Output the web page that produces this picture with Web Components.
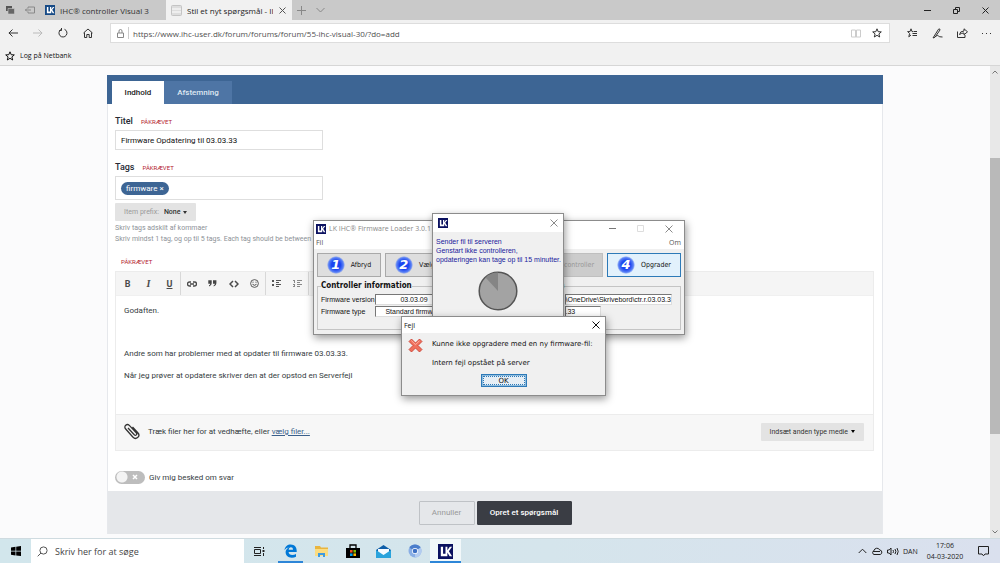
<!DOCTYPE html>
<html lang="da">
<head>
<meta charset="utf-8">
<title>Stil et nyt spørgsmål - IHC</title>
<style>
  html, body { margin: 0; }
  body { font-family: "Open Sans", "Noto Sans", sans-serif; font-size: 8px; color: #222; background: #fbfbfc; }
</style>
</head>
<body>
<desk-top></desk-top>

<script>
const BASE = `*{box-sizing:border-box}button,input,select{font:inherit;color:inherit;margin:0;padding:0;border:0;background:none;border-radius:0}
svg{display:block;flex:none}svg.l{fill:none;stroke:currentColor;stroke-width:1}p,h2{margin:0}`;

function element(name, css, html) {
  customElements.define(name, class extends HTMLElement {
    constructor() {
      super();
      this.attachShadow({ mode: "open" }).innerHTML = `<style>${BASE}${css}</style>${html}`;
    }
  });
}

/* LK logo tile */
element("lk-logo", `:host{display:block;width:10px;height:10px;flex:none}svg{width:100%;height:100%}`,
`<svg viewBox="0 0 16 16"><rect width="16" height="16" fill="var(--tile,#0b1160)"/><path d="M3 3h2.400v7.400H8V13H3zM8 3h2v3.600L12.600 3H15l-3.400 4.600L15 13h-2.600L10 9v4H8z" fill="#fff"/></svg>`);

/* Browser: tabs, address row, favourites */
element("browser-tabs", `
:host{display:flex;height:20px;background:#c9c9c9;align-items:stretch;color:#333}
.sys{display:flex;align-items:center;gap:10px;width:45px;padding-left:5px;color:#555}
.tab{display:flex;align-items:center;gap:5px;width:121px}
.tab.on{width:126px;background:#f1f1f1;padding:0 5px;color:#222}
.tab button:last-child{width:9px}
.tab .t{flex:1;justify-content:flex-start;white-space:nowrap;overflow:hidden;text-align:left}
button{display:flex;align-items:center;justify-content:center}
.more{display:flex;gap:10px;align-items:center;padding-left:5px;color:#888;flex:1}
.win{display:flex;align-items:center;color:#222}
.win button{width:29px}
`, `<div class="sys"><svg width="10" height="10" viewBox="0 0 10 10"><path d="M1 1h6v5H1z" fill="#555"/><path d="M3 3.500h6.500v5.500H3z" fill="#666" stroke="#c9c9c9" stroke-width=".6"/></svg>
<svg class="l" width="10" height="8" viewBox="0 0 10 8"><path d="M3 2.500V1h6.500v6H3V5.500M0 4h6M2 2.500L.5 4 2 5.500" stroke="#888"/></svg></div>
<div class="tab" role="tab"><lk-logo style="--tile:#164a86"></lk-logo><button class="t">IHC® controller Visual 3</button></div>
<div class="tab on" role="tab"><svg width="11" height="11" viewBox="0 0 11 11"><rect x=".5" y=".5" width="10" height="10" rx="1" fill="#ddd" stroke="#c4c4c4"/><path d="M1 4h9M1 7h9" stroke="#fff"/></svg><button class="t">Stil et nyt spørgsmål - II</button><button aria-label="Luk fane"><svg class="l" width="7" height="7" viewBox="0 0 7 7"><path d="M.5.5l6 6M6.500.5l-6 6" stroke="#555"/></svg></button></div>
<div class="more"><button aria-label="Ny fane"><svg class="l" width="9" height="9"><path d="M4.500 0v9M0 4.500h9"/></svg></button><button aria-label="Faner"><svg class="l" width="9" height="6"><path d="M.5 1l4 4 4-4"/></svg></button></div>
<div class="win"><button aria-label="Minimer"><svg class="l" width="7" height="3"><path d="M0 1.500h7"/></svg></button><button aria-label="Gendan"><svg class="l" width="7" height="7"><path d="M.5 2.500h4v4h-4zM2.500 2V.5h4v4H5"/></svg></button><button aria-label="Luk"><svg class="l" width="7" height="7"><path d="M.5.5l6 6M6.500.5l-6 6"/></svg></button></div>`);

element("address-row", `
:host{display:flex;height:26px;background:#f1f1f1;align-items:center;padding:0 5px 0 7px;color:#333}
button{display:flex;align-items:center;justify-content:center;height:20px;flex:none}
nav{display:flex;width:103px;gap:13px;flex:none}nav button{width:12px}
.bar{flex:1;display:flex;align-items:center;height:20px;background:#fff;border:1px solid #ddd;padding:0 4px 0 6px;gap:4px}
.bar input{flex:1;min-width:0;border-left:1px solid #ccc;padding-left:4px;height:12px;color:#505050;outline:0}
.bar button{width:17px}
.acts{display:flex;gap:9px;padding-left:14px}.acts button{width:16px}
`, `<nav><button aria-label="Tilbage"><svg class="l" width="10" height="8"><path d="M10 4H.8M4.500.5L1 4l3.500 3.500"/></svg></button>
<button aria-label="Frem" style="color:#bbb"><svg class="l" width="10" height="8"><path d="M0 4h9.200M5.500.5L9 4 5.500 7.500"/></svg></button>
<button aria-label="Opdater"><svg class="l" width="10" height="10"><path d="M6.500 1.300A4 4 0 1 1 3 1.500M3.500 0v2.500H1.200"/></svg></button>
<button aria-label="Hjem"><svg class="l" width="10" height="10"><path d="M.5 5L5 1l4.500 4M1.500 4.500v5h2.300V6.500h2.400v3h2.300v-5"/></svg></button></nav>
<div class="bar"><svg class="l" width="7" height="9"><path d="M.5 4h6v4.500h-6zM2 4V2a1.500 1.500 0 0 1 3 0v2" stroke="#888"/></svg>
<input aria-label="Adresse" value="https://www.ihc-user.dk/forum/forums/forum/55-ihc-visual-30/?do=add">
<button aria-label="Læsevisning" style="color:#ccc"><svg class="l" width="10" height="9"><path d="M.5 1h4v7h-4zM5.500 1h4v7h-4zM4.500 8h1"/></svg></button>
<button aria-label="Føj til favoritter"><svg class="l" width="10" height="10" viewBox="0 0 10 10"><path d="M5 .8l1.200 2.900 3.100.2-2.400 2 .8 3.100L5 7.300 2.300 9l.8-3.100-2.400-2 3.100-.2z"/></svg></button></div>
<div class="acts"><button aria-label="Hub"><svg class="l" width="11" height="10" viewBox="0 0 11 10"><path d="M6 3.600H5L4 .8 3 3.600H.6l2 1.900-.8 3.300L4 7M5.500 5.500H10M5.500 7.500H10M6.500 3.500H10"/></svg></button>
<button aria-label="Noter"><svg class="l" width="11" height="11" viewBox="0 0 11 11"><path d="M1 10L6.500 1.200Q8 .2 8 2L3 9.200 1 10M4 8q2-1 2.500 0T10.500 9"/></svg></button>
<button aria-label="Del"><svg class="l" width="11" height="10" viewBox="0 0 11 10"><path d="M.5 3.500v6H8V7M2.500 6.500Q3 3 7 3V.8l3.500 3L7 6.800V5Q4.500 5 2.500 6.500z"/></svg></button>
<button aria-label="Flere"><svg width="10" height="3"><path d="M0 1h1v1H0zM4 1h1v1H4zM8 1h1v1H8z" fill="#333"/></svg></button></div>`);

element("favourites-row", `
:host{display:flex;height:20px;background:#f1f1f1;border-bottom:1px solid #d6d6d6;align-items:center;padding-left:5px;font-size:7px}
a{display:flex;gap:5px;align-items:center;color:#111;text-decoration:none}
`, `<a href="#"><svg class="l" width="10" height="10" viewBox="0 0 10 10"><path d="M5 .8l1.200 2.900 3.100.2-2.400 2 .8 3.100L5 7.300 2.300 9l.8-3.100-2.400-2 3.100-.2z"/></svg>Log på Netbank</a>`);

element("page-scrollbar", `
:host{display:flex;flex-direction:column;width:10px;background:#e8e8e8;align-items:center;color:#777;padding:4px 0}
.before{flex:84}.thumb{flex:276;width:10px;background:#b9b9b9}.after{flex:96}
`, `<svg class="l" width="6" height="4"><path d="M.5 3.500L3 1l2.500 2.500"/></svg><span class="before"></span><span class="thumb"></span><span class="after"></span><svg class="l" width="6" height="4"><path d="M.5.5L3 3 5.500.5"/></svg>`);

/* Forum form */
element("form-label", `
:host{display:flex;align-items:baseline;gap:8px;height:17px;line-height:16px}
b{font-size:9px;font-weight:500;color:#272a34}
:host([bare]) b{display:none}
span{font-size:6px;color:#b3202c}
`, `<b><slot></slot></b><span>PÅKRÆVET</span>`);

element("editor-toolbar", `
:host{display:flex;height:24px;background:#f5f5f5;border-bottom:1px solid #f0f0f0;color:#4a4a4a;padding-left:1px}
div{display:flex;border-right:1px solid #d8d8d8}
button{width:21px;display:flex;align-items:center;justify-content:center;font-size:9px;font-weight:700}
i{font-family:"Liberation Serif",serif;font-size:10px}
`, `<div><button>B</button><button><i>I</i></button><button><u>U</u></button></div>
<div><button aria-label="Link"><svg class="l" width="10" height="6" viewBox="0 0 10 6"><path d="M4 1H2.500a2 2 0 0 0 0 4H4M6 1h1.500a2 2 0 0 1 0 4H6M3 3h4" stroke-width="1.400"/></svg></button>
<button aria-label="Citat"><svg width="9" height="7" viewBox="0 0 9 7" fill="#444"><path d="M.3.3h3.400v3Q3.700 6 1 6.600V5.200Q2.200 4.900 2.200 3.700H.3zM5 .3h3.400v3Q8.400 6 5.700 6.600V5.200Q6.900 4.900 6.900 3.700H5z"/></svg></button>
<button aria-label="Kode"><svg class="l" width="10" height="8" viewBox="0 0 10 8"><path d="M4 1L1 4l3 3M6 1l3 3-3 3" stroke-width="1.500"/></svg></button>
<button aria-label="Humørikon"><svg class="l" width="9" height="9" viewBox="0 0 9 9"><circle cx="4.500" cy="4.500" r="3.900" stroke-width=".9"/><path d="M2.500 5.300q2 2 4 0M3 2.700v1M6 2.700v1"/></svg></button></div>
<div><button aria-label="Punktliste"><svg width="9" height="7" fill="#555"><path d="M0 0h2v2H0zM0 4h2v2H0zM4 0h5v1H4zM4 2h3v1H4zM4 4h5v1H4zM4 6h3v1H4z"/></svg></button>
<button aria-label="Nummerliste"><svg width="9" height="7" fill="#888"><path d="M0 0h2v3H1V1H0zM0 4h2v3H0V6h1V5H0zM4 0h5v1H4zM4 2h3v1H4zM4 4h5v1H4zM4 6h3v1H4z"/></svg></button></div>`);

element("post-editor", `
:host{display:block;border:1px solid #ececec}
.text{height:118px;padding:8px 8px 0;line-height:14px;color:#353c41;outline:0}
.text p{margin-bottom:8px}.text p.gap{margin-bottom:29px}
footer{display:flex;align-items:center;height:36px;background:#f7f7f7;border-top:1px solid #ececec;padding:0 9px 2px 8px;color:#353c41}
footer span{flex:1;padding-left:8px}
a{color:#3a5f8b}
button{display:flex;gap:3px;align-items:center;height:18px;padding:0 9px;background:#e3e3e3;border-radius:1px;font-size:7px;color:#333}
`, `<editor-toolbar></editor-toolbar>
<div class="text" contenteditable="true" role="textbox" aria-label="Indlæg"><p class="gap">Godaften.</p><p>Andre som har problemer med at opdater til firmware 03.03.33.</p><p>Når jeg prøver at opdatere skriver den at der opstod en Serverfejl</p></div>
<footer><svg class="l" width="16" height="17" viewBox="0 0 16 17"><path d="M4 5l6.500 7a1.400 1.400 0 0 0 2-1.900L5.300 2.400A2.500 2.500 0 0 0 1.500 5.800l7.500 8.400a3.200 3.200 0 0 0 5-4.200L8.500 4" stroke="#333" stroke-width="1.300"/></svg>
<span>Træk filer her for at vedhæfte, eller <a href="#">vælg filer...</a></span>
<button>Indsæt anden type medie<svg width="4" height="3"><path d="M0 0h4L2 3z"/></svg></button></footer>`);

element("forum-form", `
:host{display:block;width:calc(100% - 16px);max-width:776px;margin:0 auto;background:#fff;border:1px solid #e6e8ec;border-width:0 1px;font-family:Roboto,sans-serif;font-size:8px;box-sizing:border-box}
.tabs{display:flex;align-items:flex-end;height:29px;margin:0 -1px;background:#3d6594;padding-left:5px}
.tabs button{height:23px;font-weight:500;color:#dfe8f2;width:68px;background:#4e75a5}
.tabs .on{background:#fff;color:#222;width:52px}
form{display:block}
.body{padding:9px 8px 7px 7px}
.box{display:flex;align-items:center;width:208px;max-width:100%;border:1px solid #dedede;padding:0 5px}
input.box{height:20px;color:#111}
.tags{height:24px}
.tag{display:flex;align-items:center;height:13px;border-radius:7px;background:#3d6594;color:#fff;padding:0 5px}
.prefix{display:flex;align-items:center;justify-content:center;width:81px;height:18px;margin:3px 0 2px;background:#e3e3e3;border-radius:1px;color:#999;font-size:7px;gap:5px}
.prefix select{appearance:none;color:#333;font-weight:500}
.prefix span{display:flex;align-items:center;gap:2px}
.help{font-size:7px;line-height:11px;color:#8d9297;white-space:nowrap}
.notify{display:flex;align-items:center;gap:4px;height:14px;margin:19px 0 0;color:#353c41}
.notify input{appearance:none;width:30px;height:13px;border-radius:7px;background:radial-gradient(circle at 7px 6px,#f4f4f4 5px,transparent 6px),#bdbdbd}
.sw{display:grid;align-items:center}.sw>*{grid-area:1/1}.sw svg{margin-left:17px;pointer-events:none}
.foot{display:flex;justify-content:center;align-items:center;gap:2px;height:43px;background:#e5e7ea}
.foot button{height:24px;border:1px solid #bfc2c6;color:#999;width:56px;border-radius:1px}
.foot .main{background:#3a3d44;color:#fff;border-color:#3a3d44;width:95px;font-weight:500}
`, `<div class="tabs" role="tablist"><button class="on" role="tab">Indhold</button><button role="tab">Afstemning</button></div>
<form><div class="body">
<form-label>Titel</form-label><input class="box" aria-label="Titel" value="Firmware Opdatering til 03.03.33">
<form-label style="margin-top:9px">Tags</form-label>
<div class="box tags"><button type="button" class="tag">firmware ×</button></div>
<label class="prefix">Item prefix:<span><select><option>None</option></select><svg width="4" height="3"><path d="M0 0h4L2 3z" fill="#333"/></svg></span></label>
<p class="help">Skriv tags adskilt af kommaer</p><p class="help">Skriv mindst 1 tag, og op til 5 tags. Each tag should be between</p>
<form-label bare style="margin:9px 0 0 6px"></form-label>
<post-editor></post-editor>
<label class="notify"><span class="sw"><input type="checkbox"><svg width="6" height="6"><path d="M1 1l4 4M5 1L1 5" stroke="#fff" stroke-width="1.500"/></svg></span>Giv mig besked om svar</label>
</div><div class="foot"><button type="button">Annuller</button><button type="button" class="main">Opret et spørgsmål</button></div></form>`);

/* Desktop windows */
element("app-window", `
:host{display:block;position:absolute;box-sizing:border-box;background:#f0f0f0;border:1px solid #8c8c8c;box-shadow:1px 3px 8px rgba(0,0,0,.4);font-size:7px;color:#111}
header{display:flex;align-items:center;gap:3px;height:var(--bar,15px);background:#fff;padding:0 var(--end,5px) 0 2px;color:var(--ink,#8a8a8a)}
slot[name=title]{display:block;flex:1;white-space:nowrap}
.b{display:flex;align-items:center;gap:21px}
`, `<header><slot name="icon"></slot><slot name="title"></slot><div class="b"><slot name="controls"></slot><button aria-label="Luk"><svg class="l" width="8" height="8"><path d="M.5.5l7 7M7.500.5l-7 7"/></svg></button></div></header><slot></slot>`);

element("step-button", `
:host{display:block;font-family:"DejaVu Sans Condensed","DejaVu Sans",sans-serif}
button{width:100%;height:24px;display:flex;align-items:center;justify-content:center;gap:6px;background:#dedede;border:1px solid #a9a9a9;white-space:nowrap}
:host([active]) button{background:#e2f1fc;border-color:#2d7ab8}
:host([off]) button{color:#999;background:#ccc;border-color:#bfbfbf;justify-content:flex-end;padding-right:8px}
:host([off]) .n{display:none}
.n{width:18px;height:18px;border-radius:50%;background:radial-gradient(circle,#1c45f0 35%,#5b82f5 58%,transparent 72%);color:#fff;font:italic 700 13px/18px "DejaVu Sans",sans-serif;text-align:center}
`, `<button><span class="n"><slot name="n"></slot></span><slot></slot></button>`);

element("loader-panel", `
:host{display:block}
.menu{display:flex;justify-content:space-between;height:13px;line-height:13px;background:#fff;padding:0 3px 0 2px;color:#555}
.steps{display:grid;grid-template-columns:64px 60px 1fr 74px;gap:4px;padding:4px 3px}
.groups{display:grid;grid-template-columns:1fr 1fr;gap:3px;padding:0 3px 4px}
fieldset{margin:0;border:1px solid #c4c4c4;padding:2px 3px 0;min-width:0;height:49px}
fieldset+fieldset{padding-right:8px}
legend{font:700 8px/10px "DejaVu Sans Condensed","DejaVu Sans",sans-serif;padding:0;white-space:nowrap}
.row{display:grid;grid-template-columns:54px 1fr;align-items:center;height:12px;white-space:nowrap;font-family:"Liberation Sans",sans-serif}
fieldset+fieldset .row{grid-template-columns:60px 1fr}
input{width:100%;height:11px;background:#fff;border:1px solid #777;border-right-color:#ddd;border-bottom-color:#ddd;min-width:0}
.row .s{width:78px;text-align:center}
.row .v{width:36px}
`, `<div class="menu"><span>Fil</span><span>Om</span></div>
<div class="steps"><step-button><span slot="n">1</span>Afbryd</step-button><step-button><span slot="n">2</span>Vælg</step-button><step-button off>controller</step-button><step-button active><span slot="n">4</span>Opgrader</step-button></div>
<div class="groups"><fieldset><legend>Controller information</legend>
<label class="row">Firmware version<input class="s" value="03.03.09"></label><label class="row">Firmware type<input class="s" value="Standard firmware"></label></fieldset>
<fieldset><legend>Fil information</legend><label class="row"><span></span><input aria-label="Fil" value="\\OneDrive\\Skrivebord\\ctr.r.03.03.33"></label><label class="row"><span></span><input class="v" aria-label="Version" value=".33"></label></fieldset></div>`);

element("progress-panel", `
:host{display:flex;flex-direction:column;align-items:center;padding:5px 3px 0;height:84px;font-family:"Liberation Sans",sans-serif}
p{color:#1a1a9c;line-height:9px;align-self:stretch;white-space:nowrap}
svg{margin-top:7px}
`, `<p>Sender fil til serveren<br>Genstart ikke controlleren,<br>opdateringen kan tage op til 15 minutter.</p>
<svg width="40" height="40" viewBox="0 0 40 40"><circle cx="20" cy="20" r="18.800" fill="#a3a3a3" stroke="#555" stroke-width="1.500"/><path d="M20 20V1.500A18.500 18.500 0 0 0 7.500 6.500z" fill="#858585"/></svg>`);

element("error-panel", `
:host{display:grid;grid-template-columns:15px 1fr;column-gap:9px;padding:5px 6px 8px;font-family:"DejaVu Sans",sans-serif}
p{line-height:10px;padding-top:1px}p+p{margin-top:8px}
.msg{white-space:nowrap}
button{grid-column:1/3;justify-self:center;width:46px;height:13px;margin-top:6px;background:#e6eef5;border:1px solid #2d7ab8;box-shadow:inset 0 0 0 1px #8fbbdc;outline:1px dotted #2d7ab8;outline-offset:-3px}
`, `<svg width="15" height="15" viewBox="0 0 15 15"><path d="M1 3.500L3.500 1l4 4 4-4L14 3.500l-4 4 4 4-2.500 2.500-4-4-4 4L1 11.500l4-4z" fill="#ef6f5c" stroke="#c63a2c" stroke-width=".8"/><path d="M3.300 2.500l4.200 4.200 4-4" fill="none" stroke="#ffb1a0"/></svg>
<div class="msg"><p>Kunne ikke opgradere med en ny firmware-fil:</p><p>Intern fejl opstået på server</p></div><button>OK</button>`);

/* Taskbar */
element("task-bar", `
:host{display:flex;height:25px;box-sizing:border-box;background:linear-gradient(90deg,#d2e6ec,#d5e5ec 55%,#dae0ee);border-top:1px solid #cfdbe0}
button{width:31px;display:flex;align-items:center;justify-content:center;border-bottom:2px solid transparent;border-top:2px solid transparent}
.run{border-bottom-color:#2d86d8;width:25px;margin:0 3px}
.on{background:#f2f8fa;border-bottom-color:#2d86d8}
label{display:flex;align-items:center;gap:7px;width:213px;background:#fff;padding:0 6px;color:#555}
input{flex:1;min-width:0;font-size:9px}input::placeholder{color:#444;opacity:1}
.tray{margin-left:auto;display:flex;align-items:center;gap:4px;color:#222;padding-right:5px}
.tray span{font-size:7px;width:16px}
.clock{width:44px;text-align:center;line-height:11px;font-size:7px}
`, `<button aria-label="Start"><svg width="10" height="10"><path d="M0 1.500l4.500-.7v4H0zM5.200.7L10 0v4.800H5.200zM0 5.500h4.500v4L0 8.800zM5.200 5.500H10V10l-4.800-.6z"/></svg></button>
<label><svg class="l" width="11" height="11"><circle cx="6.500" cy="4.500" r="3.600"/><path d="M4 7L.7 10.300"/></svg><input type="search" placeholder="Skriv her for at søge" aria-label="Søg"></label>
<button aria-label="Opgavevisning"><svg class="l" width="11" height="9" viewBox="0 0 11 9"><path d="M.5 2.500h6v4h-6zM0 .5h7M0 8.500h7M9.500 0v2M9.500 6v3"/><path d="M8.500 3h2v2h-2z" fill="#222" stroke="none"/></svg></button>
<button class="run" aria-label="Edge"><svg width="13" height="14" viewBox="0 0 13 14"><path d="M.5 6.200C1 2.300 3.500.5 6.700.5c3.900 0 6 2.800 6 6.200v1.400H4.600c.1 2 1.600 3 3.700 3 1.400 0 2.600-.4 3.700-1v2.600c-1.200.7-2.600 1-4.200 1-4 0-6.200-2.200-6.200-5.600C1.600 6 2.900 4.300 5 3.400 2.900 3.500 1.400 4.600.5 6.200zM4.700 5.700H9c0-1.700-.8-2.500-2.100-2.500S4.800 4.200 4.700 5.700z" fill="#0078d7"/></svg></button>
<button aria-label="Stifinder"><svg width="14" height="12" viewBox="0 0 14 12"><path d="M0 1h5l1 1.500h7V11H0z" fill="#e9b53f"/><path d="M0 4h13v7H0z" fill="#fbdc80"/><path d="M3 12V8h7v4H8v-2H5v2z" fill="#3f9be0"/></svg></button>
<button aria-label="Store"><svg width="14" height="14" viewBox="0 0 14 14"><path d="M0 4h14v10H0z"/><path d="M4 4V1h6v3" fill="none" stroke="#000" stroke-width="1.300"/><path d="M4 6h2.600v2.600H4z" fill="#f25022"/><path d="M7.400 6H10v2.600H7.400z" fill="#7fba00"/><path d="M4 9.400h2.600V12H4z" fill="#00a4ef"/><path d="M7.400 9.400H10V12H7.400z" fill="#ffb900"/></svg></button>
<button aria-label="Mail"><svg width="15" height="13" viewBox="0 0 15 13"><path d="M0 5l7.500-5L15 5v8H0z" fill="#0f5ea8"/><path d="M2 4h11v6H2z" fill="#f6fbff"/><path d="M0 5l7.500 5L15 5v8H0z" fill="#2aa3dc"/></svg></button>
<button aria-label="Chromium"><svg width="14" height="14" viewBox="0 0 14 14"><circle cx="7" cy="7" r="6.500" fill="#89aee5"/><path d="M7 7L1.400 3.700A6.500 6.500 0 0 1 12.600 3.700z" fill="#4a7dcb"/><path d="M7 7l5.600-3.300A6.500 6.500 0 0 1 7 13.500z" fill="#b2cbf0"/><circle cx="7" cy="7" r="3" fill="#fff"/><circle cx="7" cy="7" r="2.300" fill="#3e70c4"/></svg></button>
<button class="on" aria-label="LK IHC"><lk-logo style="width:15px;height:15px"></lk-logo></button>
<div class="tray"><svg class="l" width="9" height="6"><path d="M.7 5L4.500 1.200 8.300 5"/></svg>
<svg class="l" width="12" height="9"><path d="M3 7.500a2 2 0 0 1 0-3.800 3 3 0 0 1 5.700-.7 2.300 2.300 0 0 1 .5 4.500zM2 4.500h7"/></svg>
<svg class="l" width="12" height="9"><path d="M.5 3h1.700L4 1v7L2.200 6H.5zM6 3q1 1.500 0 3M8 2q1.700 2.500 0 5M10 1q2.400 3.500 0 7"/></svg>
<span>DAN</span><time class="clock">17:06<br>04-03-2020</time>
<button aria-label="Meddelelser" style="width:24px"><svg class="l" width="11" height="11"><path d="M.5.5h10v7.500H7L5.500 9.800 4 8H.5z"/></svg></button></div>`);

element("desk-top", `
:host{display:flex;flex-direction:column;min-height:100vh}
main{flex:1;display:flex;position:relative}
.page{flex:1;min-width:0;padding:9px 0 4px;background:#fbfbfc}
.loader{left:313px;top:154px;width:372px;--end:11px}
.progress{left:432px;top:147px;width:132px;--bar:18px}
.error{left:401px;top:250px;width:205px;--bar:16px;--ink:#111}
`, `<browser-tabs></browser-tabs><address-row></address-row><favourites-row></favourites-row>
<main><div class="page"><forum-form></forum-form></div><page-scrollbar></page-scrollbar>
<app-window class="loader" role="dialog"><lk-logo slot="icon"></lk-logo><span slot="title">LK IHC® Firmware Loader 3.0.1</span>
<svg slot="controls" width="7" height="7"><path d="M0 3.500h7" stroke="#777"/></svg><svg slot="controls" width="7" height="7"><path d="M.5.5h6v6h-6z" fill="none" stroke="#ddd"/></svg><loader-panel></loader-panel></app-window>
<app-window class="progress" role="dialog"><lk-logo slot="icon" style="margin-left:3px"></lk-logo><span slot="title"></span><progress-panel></progress-panel></app-window>
<app-window class="error" role="dialog"><span slot="title">Fejl</span><error-panel></error-panel></app-window>
</main><task-bar></task-bar>`);
</script>
</body>
</html>
